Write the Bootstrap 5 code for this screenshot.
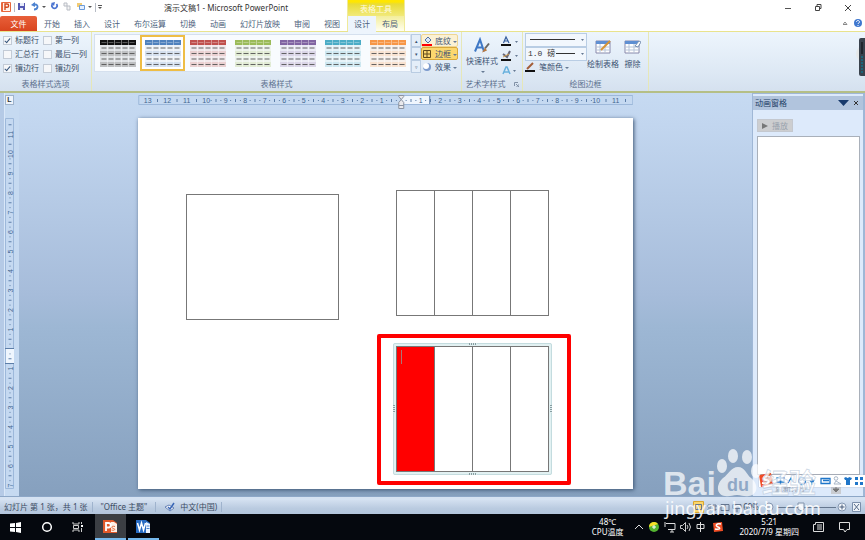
<!DOCTYPE html>
<html lang="zh-CN">
<head>
<meta charset="utf-8">
<meta name="viewport" content="width=device-width, initial-scale=1">
<title>演示文稿1 - Microsoft PowerPoint</title>
<link href="https://cdn.jsdelivr.net/npm/bootstrap@5.3.0/dist/css/bootstrap.min.css" rel="stylesheet">
<style>
body{min-height:100vh;font:8px/12px "Noto Sans","Noto Sans CJK SC",sans-serif;color:#3b5272;background:#fff;overflow:hidden}
svg{display:block;flex:none}
button,.tab{font:inherit;color:inherit;background:none;border:0;padding:0;text-decoration:none;white-space:nowrap}
.row1{height:16px}
.row2{height:15px}
.lead-part{width:347px}
.win-title{color:#333}
.ctx{width:58px;border:solid #f0ea9a;border-width:0 1px}
.ctx-top{background:linear-gradient(#ffe600 0 2px,#e9dc35 4px,#f1e97b);color:#fffbe0;line-height:18px}
.ctx-low{background:linear-gradient(#f3ee9b,#fffef0)}
.tab{padding:0 7px;line-height:16px;color:#4c5f7c}
.tab-file{width:37px;padding:0;text-align:center;color:#fff;background:linear-gradient(#e8603a,#d9451f);border-radius:2px 2px 0 0}
.ctx-low .tab{width:50%;padding:0;text-align:center}
.tab-on{background:#edf4fc;height:17px;margin-bottom:-2px;position:relative}
.win-btns{padding-right:2px}
.win-btn{width:30px;height:16px}
.ribbon{height:62px;background:linear-gradient(#edf5fd,#dde8f4 70%,#d5e1ef);border-top:1px solid #e9e38d;border-bottom:2px solid #b5bf86}
.grp{border-right:1px solid #e6e7b8;height:59px;padding:0 2px}
.grp-name{line-height:12px;height:13px;text-align:center;color:#5d718e}
.opts{grid-template-columns:40px 46px;row-gap:2px;padding:2px 0 0 1px}
.opts label{line-height:12px;color:#3c5069;white-space:nowrap}
.opts input{appearance:none;width:9px;height:9px;border:1px solid #c3cbd6;background:#f6f7f9;margin:0 3px 0 0;flex:none}
.opts input:checked::before{content:"";display:block;width:3px;height:6px;margin:0 0 0 2px;border:solid #35557c;border-width:0 1px 1px 0;transform:rotate(40deg)}
.styles-row{padding-top:2px}
.gallery{background:#f8fbfe;height:38px;border:1px solid #d5e0ee}
.thumb{width:45px;height:36px}
.thumb.on{border:2px solid #eebd45;background:#fff}
.thumb svg{margin:auto}
.spin button{width:10px;height:13px;border:1px solid #b9cce2;background:#e4eef9;font-size:5px;line-height:8px;display:block}
.fx{margin-right:1px}
.fx button{height:13px;width:37px;border:1px solid transparent;border-radius:2px;line-height:11px;gap:3px}
.fx .warm{background:#fbf1d4;border-color:#eed694}
.fx .hot{background:#fcd76e;border-color:#d8a83b}
.dd::after{content:"";border:2px solid transparent;border-top-color:#667a94;border-bottom:0;margin-left:2px;display:inline-block;vertical-align:middle}
.quick{padding:4px 3px 0 2px}
.quick .dd{line-height:8px}
.big-btn{padding-top:4px}
.big-btn svg{margin-bottom:3px}
.erase{padding-left:5px;padding-right:5px}
.pen{width:62px;padding-top:1px}
.pen select{appearance:none;height:14px;width:62px;border:1px solid #b9cde4;background:#f2f7fd;border-radius:0;padding:0 2px;font:8px/12px "Liberation Mono","Noto Sans CJK SC",monospace;color:#333;display:block}
.pen-line{height:1px;background:#333;right:12px;left:5px;top:6px}
.pen-line.short{left:31px}
.work{background:#c6daf1}
.edge{width:5px;background:#b5cae6;border-right:1px solid #d9e7f8}
.corner{width:9px;height:10px;border:1px solid #9fb3cc;background:#eff4fb;font:bold 7px/8px "Liberation Sans",sans-serif;color:#333;text-align:center;margin:2px 0 13px}
.canvas-zone{background:linear-gradient(#c6daf2,#c2d6ef 8%,#a6bcda 50%,#9db7d4 58%,#86a0be);padding-top:2px;padding-bottom:8px}
.deck{width:67.6%;margin:0 auto}
.hr-box{height:23px}
.slide{background:#fff;aspect-ratio:495/371;position:relative;box-shadow:1px 1px 4px #3c5472}
.slide table{position:absolute;width:31%;height:33.9%;border-collapse:collapse;table-layout:fixed}
.slide td{border:1px solid #777;padding:0}
.t-a{left:9.7%;top:20.4%}
.t-b{left:52.1%;top:19.3%}
.t-c{left:52.1%;top:61.4%}
.slide .fill-red{background:red;position:relative}
.fill-red::after{content:"";position:absolute;left:4px;top:3px;width:1px;height:14px;background:#a77}
.sel{position:absolute;left:51.6%;top:60.5%;width:32.1%;height:35.5%}
.sel-frame{border:3px solid #e2f1f2;outline:1px solid #c4dcdf;outline-offset:-1px;border-radius:2px}
.grab{position:absolute;background:repeating-linear-gradient(90deg,#879da0 0 1px,#dcecee 1px 2px);width:8px;height:2px;left:calc(50% - 4px)}
.grab.side{background:repeating-linear-gradient(#879da0 0 1px,#dcecee 1px 2px);width:2px;height:8px;left:auto;top:calc(50% - 4px)}
.red-frame{position:absolute;left:48.3%;top:58.2%;width:39.2%;height:40.7%;border:4px solid red;border-radius:2px}
.pane{width:113px;background:#ddeafb;border:1px solid #9fb7d6;border-width:1px 2px 0 1px;padding-top:2px}
.pane-head{height:14px;background:#b1c4dd;color:#233f67;padding:0 2px}
.play{width:36px;height:13px;background:#cdced0;color:#9aa3ae;margin:9px 0 4px 4px;border:1px solid #c4c8cf}
.anim-list{margin:0 3px 0 4px;border:1px solid #a9b0ba;background:#fff}
.reorder{height:22px;color:#8b93a0;padding:0 22px 3px 22px}
.reorder svg{background:#c9ccd1}
.status{height:17px;border-top:3px solid #d5e2f2;background:linear-gradient(#d3e0f0,#bacbe0 60%,#b3c5dc);box-shadow:0 -1px #8da7c7;color:#3b4b63;line-height:14px;position:relative}
.bar-sep{width:1px;height:10px;background:#9fb3cd}
.task{height:26px;background:#05080e;color:#fff;line-height:10px}
.app{width:31px;height:26px}
.app.open{border-bottom:2px solid #76b9ed;margin-left:2px}
.app.on{background:#3b3e43}
.tray{gap:14px;padding-right:14px}
.mark-layer{position:absolute;right:47px;bottom:15px;width:153px;pointer-events:none;z-index:5}
.ime{position:absolute;right:0;bottom:53px;width:106px;height:12px;background:#fff;z-index:4;box-shadow:0 0 1px #99a}
.gadget{position:absolute;right:0;top:37px;z-index:4}
</style>
<script src="https://cdn.jsdelivr.net/npm/bootstrap@5.3.0/dist/js/bootstrap.bundle.min.js"></script>
</head>
<body class="d-flex flex-column position-relative">
<header>
  <div class="row1 d-flex">
    <div class="lead-part d-flex align-items-center">
      <svg width="105" height="16" viewBox="0 0 105 16" aria-label="快速访问工具栏" role="img">
        <rect x="1" y="2" width="10" height="10" rx="1" fill="#e8683d"/><rect x="3" y="3" width="7" height="8" fill="#fff3ea"/><path d="M5 10V4h2a1.500 1.500 0 0 1 0 3.300H5" fill="none" stroke="#d3481c" stroke-width="1.400"/>
        <path d="M14.500 3v9M95.500 3v9" stroke="#b7bcc5"/>
        <path d="M18 3h7v7h-7z" fill="#5459b3"/><path d="M20 3h4v3h-4zM20 8h3v2h-3z" fill="#e7ecfa"/>
        <path d="M34 9.500c4 0 5-5 1-5h-2" fill="none" stroke="#4d83d0" stroke-width="1.800"/><path d="M31 5l4-3v5z" fill="#4d83d0"/><path d="M42 6h4l-2 2zM88 6h4l-2 2z" fill="#555"/>
        <path d="M52.500 4a2.600 2.600 0 1 0 4 0" fill="none" stroke="#4b74d1" stroke-width="1.700"/><path d="M51 3l4-1-1 4z" fill="#4b74d1"/>
        <path d="M64 3h3v3h-3zM67 6h3v4h-3z" fill="#f4f4f4" stroke="#b8bcc4"/>
        <path d="M77 3h5v4h-5z" fill="#f3cc74"/><path d="M79.500 5.500h5v4h-5z" fill="#e6f0ff" stroke="#6b9bd8"/>
        <path d="M98 5.500h4" stroke="#555"/><path d="M98 7h4l-2 2z" fill="#555"/>
      </svg>
      <div class="win-title flex-fill text-center">演示文稿1 - Microsoft PowerPoint</div>
    </div>
    <div class="ctx ctx-top text-center">表格工具</div>
    <div class="win-btns ms-auto d-flex">
      <button class="win-btn" aria-label="最小化"><svg class="m-auto" width="8" height="8"><path d="M1 4.500h6" stroke="#555"/></svg></button>
      <button class="win-btn" aria-label="还原"><svg class="m-auto" width="8" height="8"><path d="M1.500 2.500h4v4h-4zM3 2V.500h4v4H6" fill="none" stroke="#444"/></svg></button>
      <button class="win-btn" aria-label="关闭"><svg class="m-auto" width="8" height="8"><path d="M1 1l6 6M7 1L1 7" stroke="#444"/></svg></button>
    </div>
  </div>
  <div class="row2 d-flex">
    <nav class="lead-part d-flex">
      <a class="tab tab-file" href="#">文件</a><a class="tab" href="#">开始</a><a class="tab" href="#">插入</a><a class="tab" href="#">设计</a><a class="tab" href="#">布尔运算</a><a class="tab" href="#">切换</a><a class="tab" href="#">动画</a><a class="tab" href="#">幻灯片放映</a><a class="tab" href="#">审阅</a><a class="tab" href="#">视图</a>
    </nav>
    <nav class="ctx ctx-low d-flex"><a class="tab tab-on" href="#">设计</a><a class="tab" href="#">布局</a></nav>
    <svg class="ms-auto" width="22" height="15" role="img" aria-label="帮助"><path d="M0 8.500l2-2.500 2 2.500z" fill="none" stroke="#888"/><circle cx="15" cy="7" r="4" fill="#3f78cf"/><path d="M13.500 6c0-2 3-2 3 0 0 1-1.500 1-1.500 2M15 9v1" fill="none" stroke="#fff"/></svg>
  </div>
</header>

<section class="ribbon d-flex" aria-label="功能区">
  <div class="grp d-flex flex-column justify-content-between">
    <div class="opts d-grid">
      <label class="d-flex align-items-center"><input type="checkbox" checked>标题行</label><label class="d-flex align-items-center"><input type="checkbox">第一列</label>
      <label class="d-flex align-items-center"><input type="checkbox">汇总行</label><label class="d-flex align-items-center"><input type="checkbox">最后一列</label>
      <label class="d-flex align-items-center"><input type="checkbox" checked>镶边行</label><label class="d-flex align-items-center"><input type="checkbox">镶边列</label>
    </div>
    <div class="grp-name">表格样式选项</div>
  </div>
  <div class="grp d-flex flex-column justify-content-between">
    <div class="styles-row d-flex">
      <div class="gallery d-flex" id="gallery"></div>
      <div class="spin"><button aria-label="上">▴</button><button aria-label="下">▾</button><button aria-label="更多">▿</button></div>
      <div class="fx">
        <button class="warm d-flex align-items-center"><svg width="10" height="10"><path d="M3 4l3-3 3 3-3 3z" fill="#dbe7f8" stroke="#4d6fa5"/><path d="M0 8h10v2H0z" fill="red"/></svg><span class="dd">底纹</span></button>
        <button class="hot d-flex align-items-center"><svg width="10" height="10"><path d="M1.500 1.500h7v7h-7zM5 1v8M1 5h8" fill="none" stroke="#604a1c"/></svg><span class="dd">边框</span></button>
        <button class="d-flex align-items-center"><svg width="10" height="10"><circle cx="5" cy="5" r="4" fill="#7d9bcd"/><circle cx="4" cy="4" r="3" fill="#fff"/></svg><span class="dd">效果</span></button>
      </div>
    </div>
    <div class="grp-name">表格样式</div>
  </div>
  <div class="grp d-flex flex-column justify-content-between">
    <div class="d-flex">
      <button class="quick"><svg class="mx-auto" width="18" height="18" viewBox="0 0 18 17"><path d="M2 14L7 2l4 12M4 10h6" fill="none" stroke="#3f78c5" stroke-width="2"/><path d="M16 6l-4 5" stroke="#666" stroke-width="2"/><path d="M12 10l-3 5 5-2z" fill="#b9793f"/></svg>快速样式<span class="d-block dd"></span></button>
      <svg width="19" height="44" role="img" aria-label="文本填充、轮廓、效果"><path d="M2.500 11L5 5l3 6M3 9h4" fill="none" stroke="#355d9d" stroke-width="1.200"/><path d="M0 12h10v2H0zM0 27h10v2H0z" fill="#111"/><path d="M2 22l4 3 3-6" fill="none" stroke="#667" stroke-width="2"/><path d="M2 25l6-3" stroke="#d7a14d"/><path d="M2 42l3-7h1l3 7M3 40h5" fill="none" stroke="#69b1dd" stroke-width="1.500"/><path d="M14 9h3l-1.500 2zM14 23h3l-1.500 2zM12 38h3l-1.500 2z" fill="#667a94"/></svg>
    </div>
    <div class="grp-name d-flex justify-content-center gap-2">艺术字样式 <svg class="mt-1" width="5" height="5"><path d="M.500 4V.500H4M2 2l3 3M5 2v3H2" fill="none" stroke="#8191a6"/></svg></div>
  </div>
  <div class="grp d-flex flex-column justify-content-between">
    <div class="d-flex">
      <div class="pen">
        <div class="position-relative"><select aria-label="笔样式"><option></option></select><span class="pen-line position-absolute"></span><svg class="position-absolute top-0 end-0" width="7" height="14"><path d="M1 6h3L2.500 8z" fill="#667a94"/></svg></div>
        <div class="position-relative"><select aria-label="笔划粗细"><option>1.0 磅</option></select><span class="pen-line short position-absolute"></span><svg class="position-absolute top-0 end-0" width="7" height="14"><path d="M1 6h3L2.500 8z" fill="#667a94"/></svg></div>
        <button class="d-flex align-items-center gap-1"><svg width="10" height="10"><path d="M2 7l6-6" stroke="#a35e38" stroke-width="2"/><path d="M0 8h10v2H0z" fill="#111"/></svg><span class="dd">笔颜色</span></button>
      </div>
      <button class="big-btn"><svg class="mx-auto" width="17" height="16"><path d="M1 2h14v12H1z" fill="#fff" stroke="#88a"/><path d="M1 2h14v3H1z" fill="#5f8fd2"/><path d="M1 8h14M1 11h14M5 5v9M10 5v9" stroke="#b7c4d8"/><path d="M15 2L6 11" stroke="#d69436" stroke-width="2"/></svg>绘制表格</button>
      <button class="big-btn erase"><svg class="mx-auto" width="17" height="16"><path d="M1 2h14v12H1z" fill="#fff" stroke="#88a"/><path d="M1 2h14v3H1z" fill="#5f8fd2"/><path d="M1 8h14M1 11h14M5 5v9M10 5v9" stroke="#b7c4d8"/><path d="M11 7l4-5 2 1-3 5z" fill="#fff" stroke="#7890b3"/></svg>擦除</button>
    </div>
    <div class="grp-name">绘图边框</div>
  </div>
</section>

<main class="work d-flex flex-fill">
  <div class="edge"></div>
  <div>
    <div class="corner">L</div>
    <svg id="rv" width="14" height="371" role="img" aria-label="垂直标尺"></svg>
  </div>
  <div class="canvas-zone flex-fill">
    <div class="deck">
      <div class="hr-box"><svg id="rh" width="100%" height="16" viewBox="0 0 495 16" preserveAspectRatio="xMidYMin meet" role="img" aria-label="水平标尺"></svg></div>
      <div class="slide">
        <table class="t-a"><tr><td></td></tr></table>
        <table class="t-b"><tr><td></td><td></td><td></td><td></td></tr></table>
        <div class="sel sel-frame"></div>
        <table class="t-c"><tr><td class="fill-red"></td><td></td><td></td><td></td></tr></table>
        <div class="sel"><span class="grab top-0"></span><span class="grab bottom-0"></span><span class="grab side start-0"></span><span class="grab side end-0"></span></div>
        <div class="red-frame"></div>
      </div>
    </div>
  </div>
  <aside class="pane d-flex flex-column">
    <div class="pane-head d-flex align-items-center"><span>动画窗格</span><svg class="ms-auto" width="24" height="8"><path d="M1 1h11L6.500 7z" fill="#173a6c"/><path d="M17 2l4 4M21 2l-4 4" stroke="#333"/></svg></div>
    <button class="play d-flex align-items-center justify-content-between px-1" disabled><svg width="6" height="6"><path d="M0 0l6 3-6 3z" fill="#777"/></svg>播放</button>
    <div class="anim-list flex-fill"></div>
    <div class="reorder d-flex align-items-end justify-content-between"><span>重新排序</span><svg width="10" height="9"><path d="M5 1v6M2 4h6L5 7z" fill="#777" stroke="#777"/></svg></div>
  </aside>
</main>

<footer>
  <div class="status d-flex align-items-center">
    <div class="d-flex align-items-center ps-1"><span>幻灯片 第 1 张，共 1 张</span><span class="bar-sep ms-1 me-2"></span><span>"Office 主题"</span><span class="bar-sep mx-2"></span>
      <svg width="12" height="11"><path d="M1 5l4-2 5 3-4 3z" fill="#fff" stroke="#6480b5"/><path d="M4 5l2 2 4-6" fill="none" stroke="#3865b5" stroke-width="1.500"/></svg><span class="ms-1">中文(中国)</span><span class="bar-sep ms-1"></span></div>
    <div class="ms-auto d-flex align-items-center">
      <svg width="50" height="13" role="img" aria-label="视图"><path d="M.500.500h10v11H.500z" fill="#fbd66c" stroke="#d9a52e"/><path d="M2.500 3.500h6v5h-6zM5 4v4M15 4h3v2h-3zM20 4h3v2h-3zM15 8h3v1h-3zM20 8h3v1h-3zM28 3.500h8v6h-8zM32 4v5M40 3.500h8v4h-8zM44 7v4" fill="none" stroke="#64758e"/></svg>
      <span>69%</span>
      <svg class="mx-1" width="85" height="12"><circle cx="6" cy="6" r="4" fill="#f2f6fb" stroke="#8397b2"/><path d="M4 6h4M15 6.500h58" stroke="#65778f"/><path d="M35 2h6v6l-3 2-3-2z" fill="#eef3f9" stroke="#8092aa"/><circle cx="79" cy="6" r="4" fill="#f2f6fb" stroke="#8397b2"/><path d="M76.500 6h5M79 3.500v5" stroke="#465a78"/></svg>
      <svg class="me-1" width="9" height="10"><path d="M.500.500h8v9h-8z" fill="#eef3f9" stroke="#7b8fab"/><path d="M2 2l5 6M7 2L2 8" stroke="#566a87"/></svg>
    </div>
  </div>
  <div class="task d-flex align-items-center">
    <button class="app" aria-label="开始"><svg class="m-auto" width="11" height="11"><path d="M0 1.500L5 1v4H0zM6 1l5-1v5H6zM0 6h5v4L0 9.500zM6 6h5v5l-5-1z" fill="#fff"/></svg></button>
    <button class="app" aria-label="搜索"><svg class="m-auto" width="12" height="12"><circle cx="6" cy="6" r="4.300" fill="none" stroke="#fff" stroke-width="1.500"/></svg></button>
    <button class="app" aria-label="任务视图"><svg class="m-auto" width="12" height="12"><path d="M1 1v2h6V1M1.500 4.500h5v3h-5zM1 11V9h6v2M9.500 1v2M9.500 7v4" fill="none" stroke="#ccc"/><path d="M9 4h2v2H9z" fill="#fff"/></svg></button>
    <button class="app open on" aria-label="PowerPoint"><svg class="m-auto" width="15" height="15"><path d="M0 1h10l4 3v10H0z" fill="#e25a2b"/><path d="M8 3h3l3 2v8H8z" fill="#fff0e6"/><path d="M3 12V4h2.500a2 2 0 0 1 0 4.500H3" fill="none" stroke="#fff" stroke-width="1.800"/><path d="M12 7.500c-4-1-4 1.500-1.500 2s1 2.500-2 1.500" fill="none" stroke="#e66c3d"/></svg></button>
    <button class="app open" aria-label="Word"><svg class="m-auto" width="15" height="15"><path d="M0 1h10l4 3v10H0z" fill="#286bc2"/><path d="M10 3l4 2v9h-4z" fill="#eaf3ff"/><path d="M1.500 4l2 7 2-7 2 7 2-7" fill="none" stroke="#fff" stroke-width="1.500"/><path d="M10.500 7h3M10.500 9.500h3" stroke="#4c83ce"/></svg></button>
    <div class="tray ms-auto d-flex align-items-center">
      <div class="d-flex align-items-center gap-2">
        <div class="text-center">48℃<br>CPU温度</div>
        <svg width="94" height="16" role="img" aria-label="系统托盘"><path d="M3 10l4-4 4 4" fill="none" stroke="#ddd"/><circle cx="22" cy="8" r="5" fill="#54b331"/><path d="M17 8a5 5 0 0 1 9-3z" fill="#f7de27"/><path d="M22 6v4M20 8h4" stroke="#fff"/><path d="M34 4.500h9v6H36M33 3v5M38 13h4M40 10v3" fill="none" stroke="#ddd"/><path d="M48.500 6.500h2l3-3v9l-3-3h-2zM55 6q2 2 0 4M57 4q3 4 0 8" fill="none" stroke="#ccc"/><path d="M65 5.500h7v4h-7zM68.500 3v10" fill="none" stroke="#ddd"/><path d="M81 4l9-1 1 9-9 1z" fill="#f04e25"/><path d="M89 5c-5-1-6 2-3 3s2 3-3 2" fill="none" stroke="#fff" stroke-width="1.500"/></svg>
      </div>
      <div class="text-center">5:21<br>2020/7/9 星期四</div>
      <svg width="12" height="12"><path d="M2.500 1.500h8v9h-10v-7h2zM4 4h5M4 6h5M4 8h5" fill="none" stroke="#ddd"/></svg>
      <svg width="12" height="12"><path d="M.500 1.500h10v7H8L6 11 4.500 8.500h-4z" fill="none" stroke="#ddd"/></svg>
    </div>
  </div>
</footer>

<svg class="gadget" width="12" height="40" aria-hidden="true"><circle cx="12" cy="17" r="9" fill="#e5e8e9"/><circle cx="13" cy="17" r="7" fill="#3db64b"/><path d="M6 3q0-2 2-2h4v38H8q-2 0-2-2z" fill="#39424d"/><path d="M9 5v12" stroke="#20262e" stroke-width="2"/><path d="M9 19v17" stroke="#1c6479" stroke-width="2" stroke-dasharray="2 1"/></svg>

<div class="ime">
  <svg width="106" height="12" overflow="visible" role="img" aria-label="输入法工具栏"><path d="M0 0l12-2 2 11-12 3z" fill="#f04e25"/><path d="M11 2C4 0 3 4 7 5s4 4-4 3" fill="none" stroke="#fff" stroke-width="2"/><g fill="none" stroke="#1f76c9" stroke-width="1.300"><path d="M18 3h7v4h-7zM21.500 1v9M29 8l3-5 2 4"/><circle cx="43" cy="6" r="3.500"/><path d="M53 2v5M51 5q2 5 4 0M53 8v2M62 3.500h9v5h-9zM64 5.500h6"/></g><circle cx="77" cy="3.500" r="1.800" fill="none" stroke="#a9b7c8"/><path d="M75 9l2-3 5 3z" fill="none" stroke="#a9b7c8"/><path d="M85 3l2-1q2 2 3 0l3 1-1 2h-1v5h-4V5h-1zM96 2h3v3h-3zM101 2h3v3h-3zM96 7h3v3h-3zM101 7h3v3h-3z" fill="#1f76c9"/></svg>
</div>

<svg class="mark-layer" height="80" viewBox="0 0 153 80" overflow="visible" aria-hidden="true">
  <g fill="#fff" fill-opacity=".72" font-family="Liberation Sans,Noto Sans CJK SC,sans-serif" font-weight="bold">
    <text x="-2" y="50" font-size="34">Bai</text>
    <ellipse cx="57" cy="21" rx="5" ry="7"/><ellipse cx="68" cy="11" rx="5" ry="7"/><ellipse cx="82" cy="12" rx="5" ry="7"/><ellipse cx="91" cy="26" rx="5" ry="7"/>
    <path d="M73 22c7 0 8 7 13 11 8 6 7 17-2 18-5 1-7-1-12-1s-7 2-12 1c-9-1-9-12-2-18 6-4 8-11 15-11z"/>
    <text x="97" y="48" font-size="27" stroke="#b9c8da" stroke-opacity=".7" stroke-width=".8">经验</text>
  </g>
  <text x="62" y="46" font-family="Liberation Sans,sans-serif" font-weight="bold" font-size="18" fill="#8fa8c6">du</text>
  <text x="0" y="70" font-family="Noto Sans,sans-serif" font-size="18" fill="#fff" fill-opacity=".88">jingyan.baidu.com</text>
</svg>

<script>
const colors=['#111','#4f81bd','#c0504d','#9bbb59','#8064a2','#4bacc6','#f79646'];
document.getElementById('gallery').innerHTML=colors.map((c,i)=>{
  let cells='';
  for(let k=0;k<5;k++)for(let r=0;r<5;r++)cells+=`<path d="M${k*7+1.5} ${r*5.5+2.5}h5" stroke="${r?'#555':'#fff'}" stroke-opacity="${r?.9:.3}"/>`;
  return `<button class="thumb ${i===1?'on':''}" aria-label="表格样式 ${i+1}"><svg width="36" height="27"><g fill="${c}"><path d="M0 0h36v5H0z"/><path d="M0 5h36v6H0zM0 16h36v6H0z" opacity=".1"/><path d="M0 11h36v5H0zM0 22h36v5H0z" opacity=".25"/></g><path d="M7.5 0v27M14.5 0v27M21.5 0v27M28.5 0v27" stroke="#fff" stroke-opacity=".4"/>${cells}</svg></button>`;
}).join('');
// One centimetre is 19.5 units; quarter marks are dots and half marks are ticks.
function marks(zero,len,turn){
  let s='';
  for(let q=-60;q<=60;q++){
    const p=zero+q*19.5/4;
    if(p<3||p>len-3)continue;
    const n=Math.abs(q/4);
    if(q%4===0){ if(n) s+=turn?`<text transform="translate(8 ${p}) rotate(-90)" text-anchor="middle">${n}</text>`:`<text x="${p}" y="8" text-anchor="middle">${n}</text>`; }
    else if(n<10||q%2===0){ const h=q%2?1:3; s+=turn?`<path d="M${5-h/2} ${p}h${h}" stroke="#5d7ea8"/>`:`<path d="M${p} ${5.5-h/2}v${h}" stroke="#5d7ea8"/>`; }
  }
  return `<g font-family="Liberation Sans,sans-serif" font-size="7" fill="#41658f">${s}</g>`;
}
document.getElementById('rh').innerHTML='<path d="M.5.5h494v9H.5z" fill="#c5d9f1" stroke="#9db8da"/><path d="M263 1h28v8h-28z" fill="#eff6fe"/><path d="M291.5 1v8" stroke="#5d7ea8"/>'+marks(263,495)+'<path d="M260.5.5h5v1l-2.500 3 2.500 3v6h-5v-6l2.500-3-2.500-3zM260.5 10.500h5" fill="#e9e9ec" stroke="#8b93a1"/>';
document.getElementById('rv').innerHTML='<path d="M.5.5h8v370h-8z" fill="#c5d9f1" stroke="#9db8da"/><path d="M1 231h8v14H1z" fill="#eff6fe"/><path d="M0 230.5h9M0 245.5h9" stroke="#5d7ea8"/>'+marks(231,371,true);
</script>
</body>
</html>
